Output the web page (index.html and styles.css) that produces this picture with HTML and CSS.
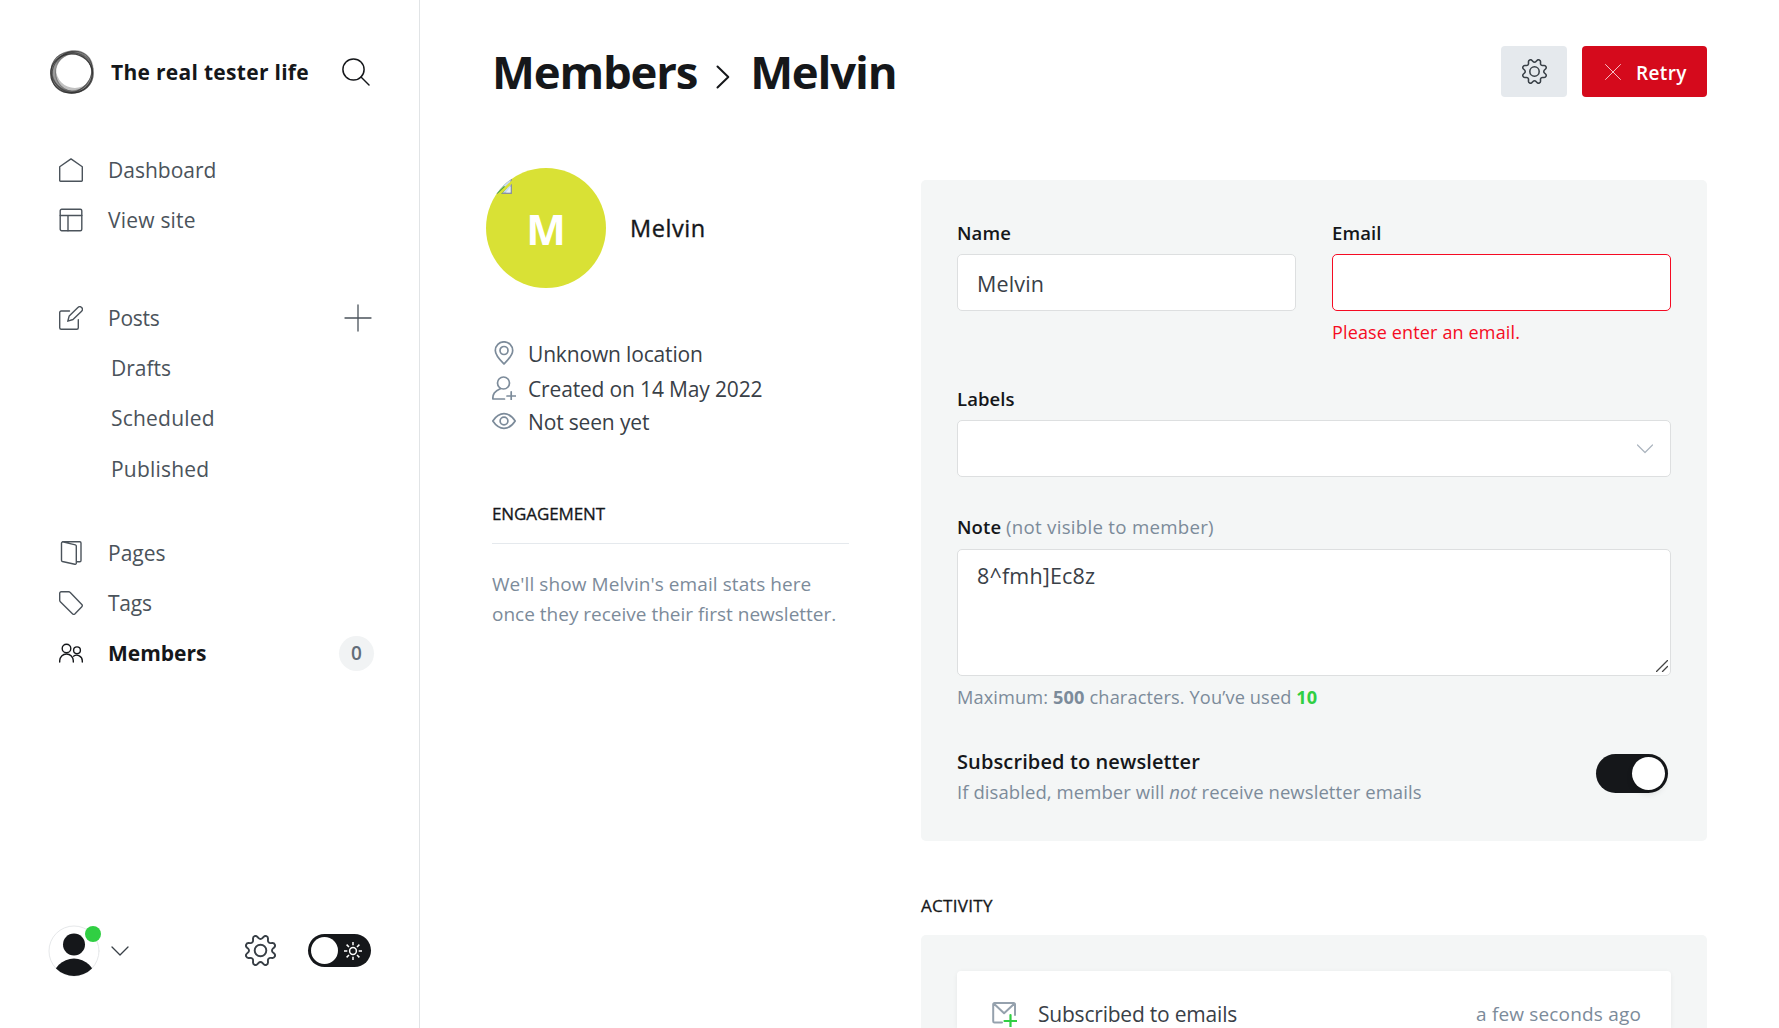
FILE: index.html
```html
<!DOCTYPE html>
<html lang="en">
<head>
<meta charset="utf-8">
<title>Members - Melvin</title>
<link rel="stylesheet" href="styles.css">
</head>
<body>
<svg class="defs" width="0" height="0">
  <symbol id="cog" viewBox="0 0 24 24"><path d="M10.546 2.438a1.957 1.957 0 0 0 2.908 0L14.4 1.4a1.959 1.959 0 0 1 3.41 1.413l-.071 1.4a1.958 1.958 0 0 0 2.051 2.054l1.4-.071a1.959 1.959 0 0 1 1.41 3.41l-1.042.94a1.96 1.96 0 0 0 0 2.909l1.042.94a1.959 1.959 0 0 1-1.413 3.41l-1.4-.071a1.958 1.958 0 0 0-2.056 2.056l.071 1.4A1.959 1.959 0 0 1 14.4 22.6l-.941-1.041a1.959 1.959 0 0 0-2.908 0L9.606 22.6A1.959 1.959 0 0 1 6.2 21.192l.072-1.4a1.958 1.958 0 0 0-2.056-2.056l-1.4.071A1.958 1.958 0 0 1 1.4 14.4l1.041-.94a1.96 1.96 0 0 0 0-2.909L1.4 9.606A1.958 1.958 0 0 1 2.809 6.2l1.4.071a1.958 1.958 0 0 0 2.058-2.06L6.2 2.81A1.959 1.959 0 0 1 9.606 1.4z"/><circle cx="12" cy="12" r="4.5"/></symbol>
</svg>
<div class="app">
  <aside class="sidebar">
    <header class="site">
      <svg class="site-logo" viewBox="0 0 46 46">
        <g stroke="none" fill="#333" fill-rule="evenodd">
          <path opacity=".5" d="M1.500 23a21.500 21.500 0 1 0 43 0a21.500 21.500 0 1 0-43 0zM7 23.500a18.700 18.700 0 1 0 37.400 0a18.700 18.700 0 1 0-37.400 0z"/>
          <path opacity=".45" d="M3 24a21 20.500 0 1 0 42 0a21 20.500 0 1 0-42 0zM3.500 22.500a19.300 19 0 1 0 38.600 0a19.300 19 0 1 0-38.600 0z"/>
          <path opacity=".3" d="M7 20a18.800 19 0 1 0 37.600 0a18.800 19 0 1 0-37.600 0zM6 24a18.500 18.500 0 1 0 37 0a18.500 18.500 0 1 0-37 0z"/>
        </g>
        <ellipse cx="22.500" cy="24.500" rx="20.800" ry="19.700" stroke="#222" stroke-width="1.200" opacity=".8"/>
        <ellipse cx="23" cy="23" rx="22" ry="18.800" transform="rotate(-50 23 23)" stroke="#333" stroke-width="1" opacity=".7"/>
        <ellipse cx="23" cy="23.500" rx="21.500" ry="19.500" transform="rotate(35 23 23.500)" stroke="#333" stroke-width="1" opacity=".6"/>
      </svg>
      <span class="site-title">The real tester life</span>
      <svg class="search" viewBox="0 0 28 28"><circle cx="11.500" cy="11.500" r="10.600"/><path d="M19 19l8 8"/></svg>
    </header>
    <nav class="nav">
      <ul>
        <li><svg viewBox="0 0 24 24"><path d="M.7 8.800V22.500a.8.8 0 0 0 .8.800h21a.8.8 0 0 0 .8-.8V8.800L12 .9z"/></svg><span>Dashboard</span></li>
        <li><svg viewBox="0 0 24 24"><rect x="1.200" y="1.200" width="21.600" height="21.600" rx="1.500"/><path d="M1.200 7.500h21.600M9 7.500v15.300"/></svg><span class="wide">View site</span></li>
      </ul>
      <ul>
        <li><svg viewBox="0 0 24 24"><path d="M10.500 5H2.200A1.500 1.500 0 0 0 .7 6.500v15.300a1.500 1.500 0 0 0 1.500 1.500h15.600a1.500 1.500 0 0 0 1.500-1.500v-8M14 13.500l-5.200 1.700 1.400-5.300 8.700-8.400a2.600 2.600 0 0 1 3.700 3.700z"/></svg><span class="tight">Posts</span><svg class="plus" viewBox="0 0 28 28"><path d="M14 1v26M1 14h26"/></svg></li>
        <li class="sub"><span>Drafts</span></li>
        <li class="sub"><span class="wide">Scheduled</span></li>
        <li class="sub"><span class="wide">Published</span></li>
      </ul>
      <ul>
        <li><svg viewBox="0 0 24 24"><path d="M3.500.800h17.300a1.200 1.200 0 0 1 1.200 1.200v17.500a1.200 1.200 0 0 1-1.200 1.200h-3.300M3.700.900l12.700 3a1.200 1.200 0 0 1 .9 1.200v17a1.200 1.200 0 0 1-1.500 1.200L3.400 20.500a1.200 1.200 0 0 1-.9-1.200V2A1.200 1.200 0 0 1 3.700.900z"/></svg><span>Pages</span></li>
        <li><svg viewBox="0 0 24 24"><path d="M2.200.700h7.500a1.800 1.800 0 0 1 1.300.600l11.800 12.300a1.500 1.500 0 0 1 0 2.100l-7 7.200a1.500 1.500 0 0 1-2.100 0L1.300 10.700a2 2 0 0 1-.6-1.400V2.200A1.500 1.500 0 0 1 2.200.700z"/></svg><span class="tight">Tags</span></li>
        <li class="active"><svg viewBox="0 0 24 24"><circle cx="7.500" cy="7.500" r="4.300"/><circle cx="18" cy="9.300" r="3.400"/><path d="M.7 21v-1.200a6.800 6.800 0 0 1 13.600 0V21M14.500 15.200a5.600 5.600 0 0 1 8.800 4.600V21"/></svg><span>Members</span><span class="count">0</span></li>
      </ul>
    </nav>
    <footer class="tools">
      <span class="me"><svg viewBox="0 0 52 52"><clipPath id="face"><circle cx="26" cy="26" r="25"/></clipPath><circle cx="26" cy="26" r="25" fill="#fff" stroke="#e6e8ea"/><g clip-path="url(#face)" fill="#15171a"><circle cx="26" cy="19.500" r="11"/><circle cx="26" cy="55" r="21.500"/></g></svg><i class="dot"></i></span>
      <svg class="me-arrow" viewBox="0 0 18 10"><path d="M1 1l8 8 8-8"/></svg>
      <svg class="tool-cog"><use href="#cog"/></svg>
      <span class="night"><i></i><svg viewBox="0 0 18 18"><circle cx="9" cy="9" r="3.400"/><path d="M9 0v3.300M9 14.700V18M0 9h3.300M14.700 9H18M2.600 2.600l2.400 2.400M13 13l2.400 2.400M2.600 15.400L5 13M13 5l2.400-2.400"/></svg></span>
    </footer>
  </aside>

  <main class="main">
    <header class="bar">
      <h1><span>Members</span><svg viewBox="0 0 14 24"><path d="M1.500 1.500L12.300 12 1.500 22.500"/></svg><span>Melvin</span></h1>
      <button class="btn btn-cog"><svg><use href="#cog"/></svg></button>
      <button class="btn btn-retry"><svg viewBox="0 0 16 16"><path d="M.5.500l15 15M15.500.500l-15 15"/></svg><span>Retry</span></button>
    </header>
    <div class="columns">
      <section class="profile">
        <div class="who">
          <span class="avatar"><svg viewBox="0 0 16 16"><path fill="#8d9399" d="M0 0h16v16H0z"/><path fill="#c6d9f5" d="M0 1h14.500v13.500H0z"/><path fill="#e8eef8" d="M10 14.500l4.500-6v6z"/><path fill="#4fa83d" d="M0 15.500L8 8l3 2-5 5.500z"/><path stroke="#d9e135" stroke-width="2.500" d="M1 18L17 3"/></svg><b>M</b></span>
          <span class="who-name">Melvin</span>
        </div>
        <ul class="facts">
          <li><svg viewBox="0 0 24 24"><path d="M12 23C9 20 3.300 14.500 3.300 9.500a8.700 8.700 0 0 1 17.400 0C20.700 14.500 15 20 12 23z"/><circle cx="12" cy="9.500" r="4"/></svg><span>Unknown location</span></li>
          <li><svg viewBox="0 0 24 24"><circle cx="11.500" cy="7" r="6"/><path d="M12.500 23H.800c0-5 1.500-7.500 7.400-10.200M15 20h8.500M19.200 15.800v8"/></svg><span>Created on 14 May 2022</span></li>
          <li><svg viewBox="0 0 24 24"><path d="M.8 12C3.500 8 7.500 4.700 12 4.700S20.500 8 23.200 12c-2.700 4-6.700 7.300-11.200 7.300S3.500 16 .800 12z"/><circle cx="12" cy="12" r="3.900"/></svg><span>Not seen yet</span></li>
        </ul>
        <h4 class="engage">ENGAGEMENT</h4>
        <p class="stats"><span class="first">We'll show Melvin's email stats here</span><br>once they receive their first newsletter.</p>
      </section>
      <section class="details">
        <div class="panel form">
          <div class="pair">
            <div><label>Name</label><div class="input">Melvin</div></div>
            <div><label>Email</label><div class="input invalid"></div><p class="error">Please enter an email.</p></div>
          </div>
          <label>Labels</label>
          <div class="input select"><svg viewBox="0 0 16 10"><path d="M.5 1l7.500 7.500L15.500 1"/></svg></div>
          <label class="note">Note <em>(not visible to member)</em></label>
          <div class="input area">8^fmh]Ec8z<svg viewBox="0 0 12 12"><path d="M.5 11.500l11-11M6.500 11.500l5-5"/></svg></div>
          <p class="hint">Maximum: <b>500</b> characters. You’ve used <b class="used">10</b></p>
          <div class="subscribe">
            <div><h5>Subscribed to newsletter</h5><p>If disabled, member will <i>not</i> receive newsletter emails</p></div>
            <span class="switch"><i></i></span>
          </div>
        </div>
        <h4 class="activity">ACTIVITY</h4>
        <div class="panel feed">
          <div class="event"><svg viewBox="0 0 25 26"><path d="M10 21.500H2.500A1.300 1.300 0 0 1 1.200 20.200V3.300A1.300 1.300 0 0 1 2.500 2h19.200A1.300 1.300 0 0 1 23 3.300V14M1.700 2.500l10.400 9.800L22.500 2.500"/><path class="add" d="M18.500 14v12M12.500 20h12"/></svg><span>Subscribed to emails</span><time>a few seconds ago</time></div>
        </div>
      </section>
    </div>
  </main>
</div>
</body>
</html>
```
FILE: styles.css
```css
* { box-sizing: border-box; }
html, body { margin: 0; height: 100%; overflow: hidden; }
body { font-family: "Open Sans", "Noto Sans", sans-serif; font-size: 21px; color: #15171a; background: #fff; }
ul, h1, h4, h5, p { margin: 0; padding: 0; list-style: none; }
svg { display: block; flex: none; fill: none; stroke: currentColor; stroke-linecap: round; stroke-linejoin: round; }
.defs { position: absolute; }
.app { display: flex; height: 1028px; white-space: nowrap; overflow: hidden; }

.sidebar { width: 420px; flex: none; border-right: 1px solid #e1e4e6; display: flex; flex-direction: column; color: #4b535b; }
.site { display: flex; align-items: center; height: 52px; margin: 46px 49px 0 49px; color: #15171a; }
.site-logo { width: 46px; height: 46px; }
.site-title { margin-left: 16px; font-weight: 700; font-size: 21px; letter-spacing: .0139em; }
.search { width: 28px; height: 28px; margin-left: auto; stroke-width: 1.5; }
.nav ul { display: flex; flex-direction: column; }
.nav { display: flex; flex-direction: column; margin-top: 47px; }
.nav ul + ul { margin-top: 47.5px; }
.nav ul:last-child { margin-top: 34px; }
.nav li { display: flex; align-items: center; height: 50.2px; padding: 0 45px 0 59px; }
.nav li > svg:first-child { width: 24px; height: 24px; margin-right: 25px; stroke-width: 1.4; }
.nav .wide { letter-spacing: .01em; }
.nav .tight { letter-spacing: -.012em; }
.nav .sub { padding-left: 111px; }
.nav .plus { width: 28px; height: 28px; margin-left: auto; margin-right: 2px; stroke-width: 1.3; }
.nav .active { font-weight: 700; color: #15171a; }
.count { margin-left: auto; width: 35px; height: 35px; border-radius: 50%; background: #f1f3f4; color: #626d79; font-size: 19px; font-weight: 600; line-height: 35px; text-align: center; }
.tools { display: flex; align-items: center; margin: auto 48px 51px; height: 53px; color: #394047; }
.me { position: relative; width: 52px; height: 52px; }
.me svg { width: 52px; height: 52px; stroke: none; }
.dot { position: absolute; left: 37px; top: 1px; width: 16px; height: 16px; border-radius: 50%; background: #30cf43; }
.me-arrow { width: 18px; height: 10px; margin-left: 11px; stroke-width: 1.3; }
.tool-cog { width: 31px; height: 31px; margin-left: auto; stroke-width: 1.5; }
.night { display: flex; align-items: center; justify-content: space-between; width: 63px; height: 33px; margin-left: 32px; padding: 0 9px 0 3px; border-radius: 17px; background: #15171a; color: #fff; }
.night i { width: 27px; height: 27px; border-radius: 50%; background: #fff; }
.night svg { width: 18px; height: 18px; stroke-width: 1.5; stroke-linecap: butt; }

.main { flex: 1; padding: 46px 72px 0 66px; }
.bar { display: flex; align-items: center; height: 51px; padding-left: 6px; }
.bar h1 { display: flex; align-items: center; margin-right: auto; font-size: 45.5px; line-height: 51px; font-weight: 700; letter-spacing: -.026em; }
.bar h1 svg { width: 14px; height: 24px; margin: 10px 20px 0 19px; stroke-width: 2; }
.btn { display: flex; align-items: center; border: 0; border-radius: 4px; height: 51px; font: 600 19px "Open Sans", sans-serif; }
.btn-cog { width: 66px; background: #e5e9ed; color: #394047; justify-content: center; }
.btn-cog svg { width: 25px; height: 25px; stroke-width: 1.5; }
.btn-retry { width: 125px; margin-left: 15px; padding: 0 0 0 23px; background: #d50a1c; color: #fff; letter-spacing: .02em; }
.btn-retry svg { width: 16px; height: 16px; margin-right: 15px; stroke-width: 1; opacity: .75; }
.btn-retry span { padding-top: 2px; }

.columns { display: flex; }
.profile { width: 435px; flex: none; padding-top: 71px; }
.who { display: flex; align-items: center; }
.avatar { position: relative; display: flex; align-items: center; justify-content: center; width: 120px; height: 120px; border-radius: 50%; background: #d9e135; color: #fff; font-size: 42px; overflow: hidden; }
.avatar b { font-weight: 700; line-height: 1; padding-top: 2px; }
.avatar svg { position: absolute; left: 10px; top: 10px; width: 16px; height: 16px; stroke: none; }
.who-name { margin-left: 24px; font-size: 23.5px; letter-spacing: .025em; -webkit-text-stroke: .35px; }
.facts { padding: 48px 0 0 6px; color: #394047; letter-spacing: -.0075em; }
.facts li { display: flex; align-items: center; height: 36px; }
.facts li:nth-child(2) { height: 34px; }
.facts li:nth-child(3) { height: 32px; }
.facts svg { width: 24px; height: 24px; margin: -2px 12px 0 0; color: #7c8b9a; stroke-width: 1.7; }
h4 { font-size: 17px; font-weight: 400; line-height: 25px; -webkit-text-stroke: .3px; }
.engage { margin: 63px 72px 0 6px; padding-bottom: 17px; border-bottom: 1px solid #e5e9ed; letter-spacing: -.006em; }
.stats { margin: 25px 0 0 6px; font-size: 19px; line-height: 30px; color: #7c8b9a; }
.stats .first { letter-spacing: .004em; }

.details { flex: 1; padding-top: 83px; }
.panel { background: #f4f6f6; border-radius: 5px; padding: 36px; }
.form { height: 661px; }
.pair { display: grid; grid-template-columns: 1fr 1fr; gap: 36px; height: 166px; }
label { display: block; height: 38px; line-height: 33px; font-size: 18.5px; font-weight: 600; letter-spacing: .005em; }
.input { display: flex; align-items: center; height: 57px; padding: 1px 19px 0; border: 1px solid #dddfe0; border-radius: 5px; background: #fff; color: #394047; font-size: 21.5px; letter-spacing: .008em; }
.invalid { border-color: #f50b23; }
.error { margin-top: 7px; font-size: 18px; line-height: 28px; letter-spacing: .008em; color: #f50b23; }
.select svg { width: 16px; height: 10px; margin-left: auto; margin-right: -2px; color: #abb4be; stroke-width: 1.2; }
.note { margin-top: 33px; height: 39px; }
.note em { font-style: normal; font-weight: 400; font-size: 18.7px; letter-spacing: .014em; color: #7c8b9a; }
.area { position: relative; height: 127px; align-items: flex-start; line-height: 28px; padding-top: 12px; }
.area svg { position: absolute; right: 2px; bottom: 3px; width: 12px; height: 12px; color: #444; stroke-width: 1.3; }
.hint { margin-top: 7px; font-size: 18.2px; line-height: 28px; letter-spacing: .007em; color: #7c8b9a; }
.hint b { font-weight: 700; }
.hint .used { color: #30cf43; }
.subscribe { display: flex; justify-content: space-between; margin-top: 37px; }
.subscribe h5 { font-size: 20px; font-weight: 600; line-height: 28px; letter-spacing: .0056em; }
.subscribe p { margin-top: 2px; font-size: 18.5px; line-height: 28px; letter-spacing: .004em; color: #7c8b9a; }
.switch { display: flex; justify-content: flex-end; width: 72px; height: 39px; margin: 6px 3px 0 0; padding: 3px; border-radius: 20px; background: #15171a; }
.switch i { width: 33px; height: 33px; border-radius: 50%; background: #fff; box-shadow: 0 4px 6px rgba(0,0,0,.1); }
.activity { margin: 52px 0 17px; letter-spacing: .018em; }
.feed { height: 93px; padding-bottom: 0; border-radius: 5px 5px 0 0; }
.event { display: flex; align-items: center; height: 57px; padding: 29px 30px 0 35px; border-radius: 4px 4px 0 0; background: #fff; box-shadow: 0 1px 5px rgba(0,0,0,.06); color: #394047; letter-spacing: -.01em; }
.event svg { width: 25px; height: 26px; margin-right: 21px; color: #95a1ad; stroke-width: 2; }
.event .add { stroke: #30cf43; stroke-width: 2.2; }
.event time { margin-left: auto; font-size: 19px; letter-spacing: .009em; color: #7c8b9a; }
```
